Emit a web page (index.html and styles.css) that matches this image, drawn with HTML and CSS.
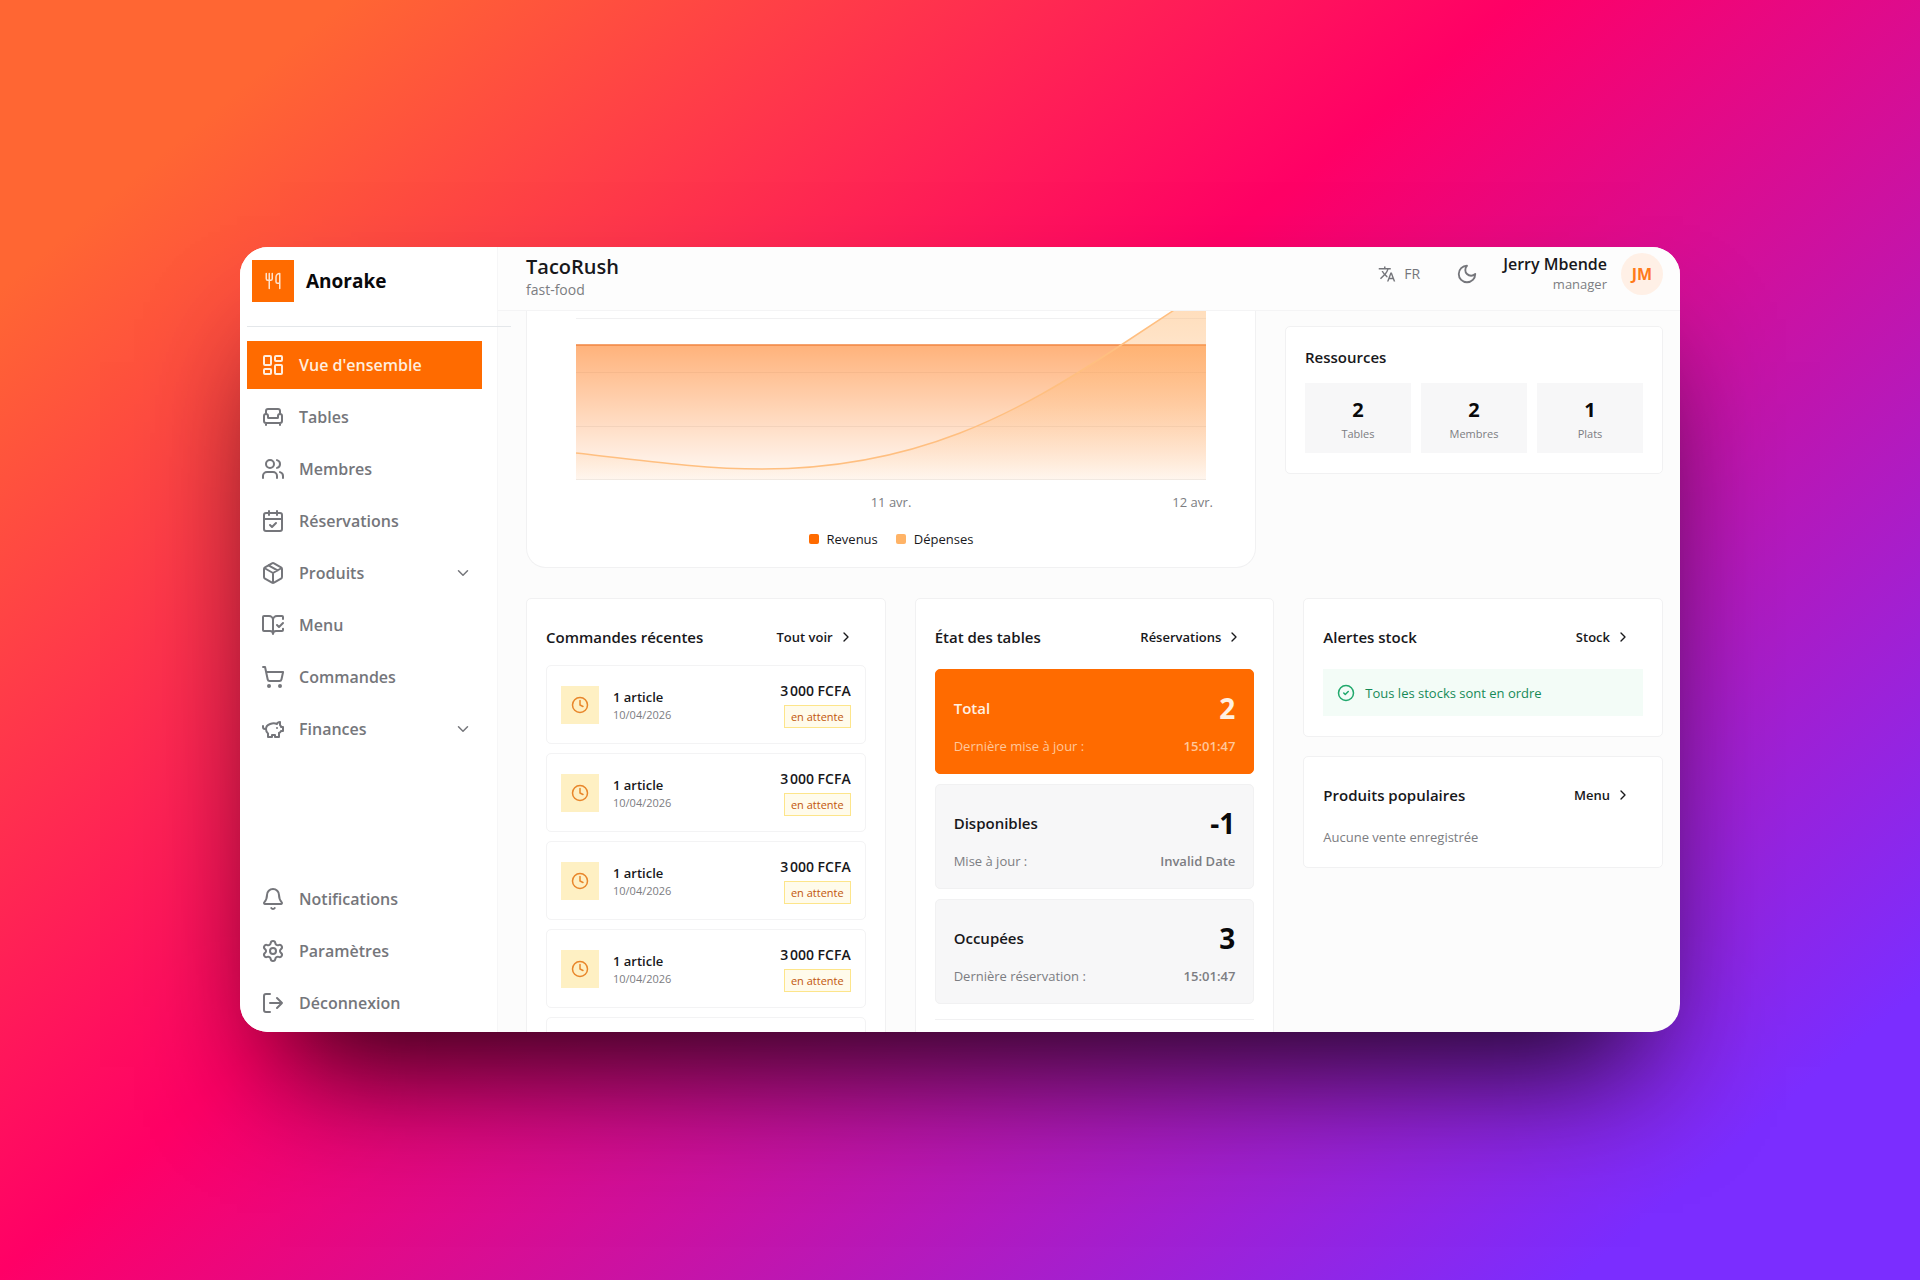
FILE: index.html
```html
<!DOCTYPE html>
<html lang="fr">
<head>
    <meta charset="UTF-8">
    <meta name="viewport" content="width=device-width, initial-scale=1.0">
    <title>Anorake - Vue d'ensemble</title>
    <link rel="stylesheet" href="styles.css">
</head>
<body>
    <!-- Icon sprite -->
    <svg class="sprite" aria-hidden="true">
        <symbol id="i-utensils" viewBox="0 0 24 24"><path d="M3 2v7c0 1.1.9 2 2 2h4a2 2 0 0 0 2-2V2M7 2v20M21 15V2a5 5 0 0 0-5 5v6c0 1.1.9 2 2 2h3Zm0 0v7"/></symbol>
        <symbol id="i-dashboard" viewBox="0 0 24 24"><rect x="3" y="3" width="7" height="9" rx="1"/><rect x="14" y="3" width="7" height="5" rx="1"/><rect x="14" y="12" width="7" height="9" rx="1"/><rect x="3" y="16" width="7" height="5" rx="1"/></symbol>
        <symbol id="i-armchair" viewBox="0 0 24 24"><path d="M19 9V6a2 2 0 0 0-2-2H7a2 2 0 0 0-2 2v3M3 16a2 2 0 0 0 2 2h14a2 2 0 0 0 2-2v-5a2 2 0 0 0-4 0v1.5a.5.5 0 0 1-.5.5h-9a.5.5 0 0 1-.5-.5V11a2 2 0 0 0-4 0zM5 18v2M19 18v2"/></symbol>
        <symbol id="i-users" viewBox="0 0 24 24"><path d="M16 21v-2a4 4 0 0 0-4-4H6a4 4 0 0 0-4 4v2M22 21v-2a4 4 0 0 0-3-3.87M16 3.13a4 4 0 0 1 0 7.75"/><circle cx="9" cy="7" r="4"/></symbol>
        <symbol id="i-calendar" viewBox="0 0 24 24"><path d="M8 2v4M16 2v4M3 10h18M9 16l2 2 4-4"/><rect x="3" y="4" width="18" height="18" rx="2"/></symbol>
        <symbol id="i-package" viewBox="0 0 24 24"><path d="M11 21.73a2 2 0 0 0 2 0l7-4A2 2 0 0 0 21 16V8a2 2 0 0 0-1-1.73l-7-4a2 2 0 0 0-2 0l-7 4A2 2 0 0 0 3 8v8a2 2 0 0 0 1 1.73zM12 22V12M3.3 7l8.7 5 8.7-5M7.5 4.27l9 5.15"/></symbol>
        <symbol id="i-book" viewBox="0 0 24 24"><path d="M12 21V7M16 12l2 2 4-4M22 6V4a1 1 0 0 0-1-1h-5a4 4 0 0 0-4 4 4 4 0 0 0-4-4H3a1 1 0 0 0-1 1v13a1 1 0 0 0 1 1h6a3 3 0 0 1 3 3 3 3 0 0 1 3-3h6a1 1 0 0 0 1-1v-1.3"/></symbol>
        <symbol id="i-cart" viewBox="0 0 24 24"><circle cx="8" cy="21" r="1"/><circle cx="19" cy="21" r="1"/><path d="M2.05 2.05h2l2.66 12.42a2 2 0 0 0 2 1.58h9.78a2 2 0 0 0 1.95-1.57l1.65-7.43H5.12"/></symbol>
        <symbol id="i-piggy" viewBox="0 0 24 24"><path d="M19 5c-1.5 0-2.8 1.4-3 2-3.5-1.5-11-.3-11 5 0 1.8 0 3 2 4.5V20h4v-2h3v2h4v-4c1-.5 1.7-1 2-2h2v-4h-2c0-1-.5-1.5-1-2V5zM2 9v1c0 1.1.9 2 2 2h1M16 11h.01"/></symbol>
        <symbol id="i-bell" viewBox="0 0 24 24"><path d="M10.268 21a2 2 0 0 0 3.464 0M3.262 15.326A1 1 0 0 0 4 17h16a1 1 0 0 0 .74-1.673C19.41 13.956 18 12.499 18 8A6 6 0 0 0 6 8c0 4.499-1.411 5.956-2.738 7.326"/></symbol>
        <symbol id="i-settings" viewBox="0 0 24 24"><path d="M9.671 4.136a2.34 2.34 0 0 1 4.659 0 2.34 2.34 0 0 0 3.319 1.915 2.34 2.34 0 0 1 2.33 4.033 2.34 2.34 0 0 0 0 3.831 2.34 2.34 0 0 1-2.33 4.033 2.34 2.34 0 0 0-3.319 1.915 2.34 2.34 0 0 1-4.659 0 2.34 2.34 0 0 0-3.32-1.915 2.34 2.34 0 0 1-2.33-4.033 2.34 2.34 0 0 0 0-3.831A2.34 2.34 0 0 1 6.35 6.051a2.34 2.34 0 0 0 3.319-1.915"/><circle cx="12" cy="12" r="3"/></symbol>
        <symbol id="i-logout" viewBox="0 0 24 24"><path d="M16 17l5-5-5-5M21 12H9M9 21H5a2 2 0 0 1-2-2V5a2 2 0 0 1 2-2h4"/></symbol>
        <symbol id="i-moon" viewBox="0 0 24 24"><path d="M12 3a6 6 0 0 0 9 9 9 9 0 1 1-9-9Z"/></symbol>
        <symbol id="i-clock" viewBox="0 0 24 24"><circle cx="12" cy="12" r="10"/><path d="M12 6v6l4 2"/></symbol>
        <symbol id="i-check" viewBox="0 0 24 24"><circle cx="12" cy="12" r="10"/><path d="M9 12l2 2 4-4"/></symbol>
        <symbol id="i-down" viewBox="0 0 24 24"><path d="M6 9l6 6 6-6"/></symbol>
        <symbol id="i-right" viewBox="0 0 24 24"><path d="M9 18l6-6-6-6"/></symbol>
        <symbol id="i-translate" viewBox="0 0 24 24"><path d="m12.87 15.07-2.54-2.51.03-.03c1.74-1.94 2.98-4.17 3.71-6.53H17V4h-7V2H8v2H1v1.99h11.17C11.5 7.92 10.44 9.75 9 11.35 8.07 10.32 7.3 9.19 6.69 8h-2c.73 1.63 1.73 3.17 2.98 4.56l-5.09 5.02L4 19l5-5 3.11 3.11.76-2.04zM18.5 10h-2L12 22h2l1.12-3h4.75L21 22h2l-4.5-12zm-2.62 7 1.62-4.33L19.12 17h-3.24z"/></symbol>
    </svg>

    <div class="window">
        <aside class="sidebar">
            <div class="brand">
                <span class="brand-logo"><svg class="icon icon-md"><use href="#i-utensils"/></svg></span>
                <span class="brand-name">Anorake</span>
            </div>
            <hr class="divider">
            <nav class="nav">
                <a href="#" class="nav-item active"><svg class="icon icon-lg"><use href="#i-dashboard"/></svg>Vue d'ensemble</a>
                <a href="#" class="nav-item"><svg class="icon icon-lg"><use href="#i-armchair"/></svg>Tables</a>
                <a href="#" class="nav-item"><svg class="icon icon-lg"><use href="#i-users"/></svg>Membres</a>
                <a href="#" class="nav-item"><svg class="icon icon-lg"><use href="#i-calendar"/></svg>Réservations</a>
                <button type="button" class="nav-item"><svg class="icon icon-lg"><use href="#i-package"/></svg>Produits<svg class="icon icon-md chevron"><use href="#i-down"/></svg></button>
                <a href="#" class="nav-item"><svg class="icon icon-lg"><use href="#i-book"/></svg>Menu</a>
                <a href="#" class="nav-item"><svg class="icon icon-lg"><use href="#i-cart"/></svg>Commandes</a>
                <button type="button" class="nav-item"><svg class="icon icon-lg"><use href="#i-piggy"/></svg>Finances<svg class="icon icon-md chevron"><use href="#i-down"/></svg></button>
            </nav>
            <nav class="nav nav-bottom">
                <a href="#" class="nav-item"><svg class="icon icon-lg"><use href="#i-bell"/></svg>Notifications</a>
                <a href="#" class="nav-item"><svg class="icon icon-lg"><use href="#i-settings"/></svg>Paramètres</a>
                <button type="button" class="nav-item"><svg class="icon icon-lg"><use href="#i-logout"/></svg>Déconnexion</button>
            </nav>
        </aside>

        <div class="main">
            <header class="topbar">
                <div class="shop">
                    <h1>TacoRush</h1>
                    <p>fast-food</p>
                </div>
                <div class="tools">
                    <button type="button" class="tool-btn"><svg class="icon icon-md icon-fill"><use href="#i-translate"/></svg>FR</button>
                    <button type="button" class="tool-btn" aria-label="Mode sombre"><svg class="icon"><use href="#i-moon"/></svg></button>
                    <div class="user">
                        <div class="user-text">
                            <strong>Jerry Mbende</strong>
                            <span>manager</span>
                        </div>
                        <span class="avatar">JM</span>
                    </div>
                </div>
            </header>

            <main class="content">
                <div class="row-top">
                    <section class="chart-card">
                        <svg class="plot" viewBox="0 0 631 169" preserveAspectRatio="none" role="img" aria-label="Revenus et dépenses">
                            <defs>
                                <linearGradient id="revenue" x1="0" y1="0" x2="0" y2="1">
                                    <stop offset="0" stop-color="#ff6b00" stop-opacity=".52"/>
                                    <stop offset="1" stop-color="#ff6b00" stop-opacity=".03"/>
                                </linearGradient>
                                <linearGradient id="expense" x1="0" y1="0" x2="0" y2="1">
                                    <stop offset="0" stop-color="#ffb366" stop-opacity=".48"/>
                                    <stop offset="1" stop-color="#ffb366" stop-opacity=".06"/>
                                </linearGradient>
                            </defs>
                            <path class="grid-line" d="M0 7.5H631M0 61.5H631M0 115.5H631M0 168.5H631"/>
                            <path fill="url(#revenue)" d="M0 34H631V169H0Z"/>
                            <path class="line-revenue" d="M0 34H631"/>
                            <path fill="url(#expense)" d="M0 142C70 150 130 158 186 158C340 158 440 104 546 34L631 -22V169H0Z"/>
                            <path class="line-expense" d="M0 142C70 150 130 158 186 158C340 158 440 104 546 34L631 -22"/>
                        </svg>
                        <div class="axis">
                            <span></span>
                            <span>11 avr.</span>
                            <span>12 avr.</span>
                        </div>
                        <ul class="legend">
                            <li><i class="dot dot-revenue"></i>Revenus</li>
                            <li><i class="dot dot-expense"></i>Dépenses</li>
                        </ul>
                    </section>

                    <section class="card resources">
                        <h2>Ressources</h2>
                        <div class="tiles">
                            <div class="tile"><strong>2</strong><span>Tables</span></div>
                            <div class="tile"><strong>2</strong><span>Membres</span></div>
                            <div class="tile"><strong>1</strong><span>Plats</span></div>
                        </div>
                    </section>
                </div>

                <div class="row-bottom">
                    <section class="card">
                        <div class="card-head orders-head">
                            <h2>Commandes récentes</h2>
                            <a href="#" class="more">Tout voir<svg class="icon icon-sm"><use href="#i-right"/></svg></a>
                        </div>
                        <ul class="orders">
                            <li class="order">
                                <span class="order-icon"><svg class="icon icon-md"><use href="#i-clock"/></svg></span>
                                <div class="order-info"><strong>1 article</strong><span>10/04/2026</span></div>
                                <div class="order-side"><strong>3&#8239;000 FCFA</strong><span class="badge">en attente</span></div>
                            </li>
                            <li class="order">
                                <span class="order-icon"><svg class="icon icon-md"><use href="#i-clock"/></svg></span>
                                <div class="order-info"><strong>1 article</strong><span>10/04/2026</span></div>
                                <div class="order-side"><strong>3&#8239;000 FCFA</strong><span class="badge">en attente</span></div>
                            </li>
                            <li class="order">
                                <span class="order-icon"><svg class="icon icon-md"><use href="#i-clock"/></svg></span>
                                <div class="order-info"><strong>1 article</strong><span>10/04/2026</span></div>
                                <div class="order-side"><strong>3&#8239;000 FCFA</strong><span class="badge">en attente</span></div>
                            </li>
                            <li class="order">
                                <span class="order-icon"><svg class="icon icon-md"><use href="#i-clock"/></svg></span>
                                <div class="order-info"><strong>1 article</strong><span>10/04/2026</span></div>
                                <div class="order-side"><strong>3&#8239;000 FCFA</strong><span class="badge">en attente</span></div>
                            </li>
                            <li class="order"></li>
                        </ul>
                    </section>

                    <section class="card">
                        <div class="card-head">
                            <h2>État des tables</h2>
                            <a href="#" class="more">Réservations<svg class="icon icon-sm"><use href="#i-right"/></svg></a>
                        </div>
                        <div class="states">
                            <div class="state state-total">
                                <div class="state-row"><h3>Total</h3><strong>2</strong></div>
                                <div class="state-meta"><span>Dernière mise à jour :</span><time>15:01:47</time></div>
                            </div>
                            <div class="state">
                                <div class="state-row"><h3>Disponibles</h3><strong>-1</strong></div>
                                <div class="state-meta"><span>Mise à jour :</span><time>Invalid Date</time></div>
                            </div>
                            <div class="state">
                                <div class="state-row"><h3>Occupées</h3><strong>3</strong></div>
                                <div class="state-meta"><span>Dernière réservation :</span><time>15:01:47</time></div>
                            </div>
                        </div>
                        <hr class="states-end">
                    </section>

                    <div class="stack">
                        <section class="card">
                            <div class="card-head">
                                <h2>Alertes stock</h2>
                                <a href="#" class="more">Stock<svg class="icon icon-sm"><use href="#i-right"/></svg></a>
                            </div>
                            <p class="notice"><svg class="icon icon-md"><use href="#i-check"/></svg>Tous les stocks sont en ordre</p>
                        </section>
                        <section class="card">
                            <div class="card-head">
                                <h2>Produits populaires</h2>
                                <a href="#" class="more">Menu<svg class="icon icon-sm"><use href="#i-right"/></svg></a>
                            </div>
                            <p class="empty">Aucune vente enregistrée</p>
                        </section>
                    </div>
                </div>
            </main>
        </div>
    </div>
</body>
</html>
```
FILE: styles.css
```css
* {
    box-sizing: border-box;
}
body {
    margin: 0;
    min-height: 100vh;
    display: flex;
    align-items: center;
    justify-content: center;
    overflow: hidden;
    padding-bottom: 1px;
    font-family: "Open Sans", "Noto Sans", sans-serif;
    font-size: 13px;
    line-height: 20px;
    color: #18181b;
    background: linear-gradient(140deg, #ff6633 10%, #ff0066 44%, #7b2dff 90%);
}
h1, h2, h3, p, ul {
    margin: 0;
    padding: 0;
}
ul {
    list-style: none;
}
a {
    color: inherit;
    text-decoration: none;
}
button {
    font: inherit;
    color: inherit;
    background: none;
    border: 0;
    padding: 0;
    cursor: pointer;
}
.sprite {
    display: none;
}
.icon {
    flex: none;
    width: 22px;
    height: 22px;
    fill: none;
    stroke: currentColor;
    stroke-width: 2;
    stroke-linecap: round;
    stroke-linejoin: round;
}
.icon-sm {
    width: 16px;
    height: 16px;
}
.icon-md {
    width: 18px;
    height: 18px;
}
.icon-lg {
    width: 24px;
    height: 24px;
}
.icon-fill {
    fill: currentColor;
    stroke: none;
}
.window {
    display: flex;
    width: 75%;
    aspect-ratio: 1440 / 785;
    border-radius: 28px;
    overflow: hidden;
    background: #fcfcfc;
    box-shadow: 0 75px 120px -40px rgba(0, 0, 0, 0.85);
}

/* Sidebar */
.sidebar {
    flex: none;
    display: flex;
    flex-direction: column;
    width: 258px;
    padding: 13px 0 5px 7px;
    background: #fff;
    border-right: 1px solid #f6f6f7;
}
.brand {
    display: flex;
    align-items: center;
    gap: 12px;
    padding-left: 5px;
}
.brand-logo {
    display: flex;
    align-items: center;
    justify-content: center;
    width: 42px;
    height: 42px;
    background: #ff6b00;
    color: #ffe3cc;
}
.brand-name {
    font-size: 19px;
    font-weight: 700;
    color: #09090b;
}
/* Runs a little past the sidebar edge */
.divider {
    flex: none;
    width: 264px;
    height: 1px;
    margin: 24px 0 14px;
    border: 0;
    background: #e4e7ea;
    z-index: 1;
}
.nav {
    display: flex;
    flex-direction: column;
    gap: 4px;
    padding-right: 15px;
}
.nav-bottom {
    margin-top: auto;
}
.nav-item {
    display: flex;
    align-items: center;
    gap: 14px;
    height: 48px;
    padding: 0 10px 0 14px;
    font-size: 16px;
    font-weight: 600;
    color: #75767b;
    text-align: left;
}
.nav-item.active {
    background: #ff6b00;
    color: #ffeddd;
}
.chevron {
    margin-left: auto;
}

/* Header */
.main {
    flex: 1;
    display: flex;
    flex-direction: column;
    min-width: 0;
}
.topbar {
    flex: none;
    display: flex;
    justify-content: space-between;
    align-items: flex-start;
    height: 64px;
    padding: 6px 17px 0 28px;
    background: #fdfdfd;
    border-bottom: 1px solid #f4f4f5;
}
.shop h1 {
    font-size: 20px;
    line-height: 28px;
    font-weight: 600;
}
.shop p {
    font-size: 14px;
    line-height: 18px;
    color: #7c7d82;
}
.tools {
    display: flex;
    align-items: center;
    height: 42px;
    gap: 36px;
}
.tool-btn {
    display: flex;
    align-items: center;
    gap: 8px;
    font-size: 14px;
    color: #75767b;
}
.user {
    display: flex;
    align-items: center;
    gap: 14px;
    margin-left: -11px;
}
.user-text {
    text-align: right;
}
.user-text strong,
.user-text span {
    display: block;
}
.user-text strong {
    font-size: 16px;
    font-weight: 600;
}
.user-text span {
    color: #7c7d82;
}
.avatar {
    display: flex;
    align-items: center;
    justify-content: center;
    width: 42px;
    height: 42px;
    border-radius: 50%;
    background: #fff0e6;
    color: #ff7a1a;
    font-size: 16px;
    font-weight: 700;
}

/* Content */
.content {
    flex: 1;
    min-height: 0;
    overflow: hidden;
    padding: 0 17px 0 28px;
}
.row-top {
    display: grid;
    grid-template-columns: minmax(0, 1fr) 378px;
    gap: 29px;
    align-items: start;
}
.row-bottom {
    display: grid;
    grid-template-columns: repeat(3, minmax(0, 1fr));
    gap: 29px;
    margin-top: 30px;
}
.card {
    padding: 20px 19px;
    border: 1px solid #f1f1f2;
    border-radius: 5px;
    background: #fff;
}
.card h2 {
    font-size: 15px;
    font-weight: 600;
}
.chart-card {
    border: 1px solid #f1f1f2;
    border-top: 0;
    border-radius: 0 0 20px 20px;
    background: #fff;
    padding-bottom: 18px;
}
.plot {
    display: block;
    width: calc(100% - 98px);
    height: 169px;
    margin: 0 49px;
}
.grid-line {
    fill: none;
    stroke: #f0f0f1;
}
.line-revenue {
    fill: none;
    stroke: #f08540;
    stroke-width: 1.5;
}
.line-expense {
    fill: none;
    stroke: #ffbf80;
    stroke-width: 1.5;
}
.axis {
    display: grid;
    grid-template-columns: 1fr 1fr 1fr;
    padding: 12px 42px 0;
    color: #7c7d82;
    text-align: center;
}
.axis span:last-child {
    text-align: right;
}
.legend {
    display: flex;
    justify-content: center;
    gap: 18px;
    margin-top: 17px;
}
.legend li {
    display: flex;
    align-items: center;
    gap: 8px;
}
.dot {
    width: 10px;
    height: 10px;
    border-radius: 2px;
}
.dot-revenue {
    background: #ff6b00;
}
.dot-expense {
    background: #ffb366;
}
.resources {
    margin-top: 15px;
}
.tiles {
    display: grid;
    grid-template-columns: repeat(3, 1fr);
    gap: 10px;
    margin-top: 16px;
}
.tile {
    display: flex;
    flex-direction: column;
    align-items: center;
    padding: 13px 0 9px;
    background: #f7f7f8;
}
.tile strong {
    font-size: 20px;
    line-height: 28px;
    font-weight: 700;
    color: #09090b;
}
.tile span {
    font-size: 11px;
    color: #7c7d82;
}
.card-head {
    display: flex;
    align-items: center;
    justify-content: space-between;
    height: 36px;
    margin-bottom: 14px;
}
.orders-head {
    margin-bottom: 10px;
}
.more {
    display: flex;
    align-items: center;
    gap: 5px;
    padding-right: 12px;
    font-weight: 600;
}

/* Orders */
.orders {
    display: flex;
    flex-direction: column;
    gap: 9px;
}
.order {
    display: flex;
    align-items: center;
    gap: 14px;
    height: 79px;
    padding: 0 14px;
    border: 1px solid #f3f3f4;
    border-radius: 5px;
}
.order-icon {
    display: flex;
    align-items: center;
    justify-content: center;
    width: 38px;
    height: 38px;
    background: #fef0c3;
    color: #e8862a;
}
.order-info {
    flex: 1;
}
.order strong {
    display: block;
    font-size: 14px;
    font-weight: 600;
}
.order .order-info strong {
    font-size: 13px;
}
.order-info span {
    display: block;
    font-size: 11px;
    line-height: 15px;
    color: #7c7d82;
}
.order-side {
    display: flex;
    flex-direction: column;
    align-items: flex-end;
    gap: 4px;
}
.badge {
    padding: 0 6px;
    border: 1px solid #fde58a;
    background: #fffbeb;
    color: #c2560c;
    font-size: 11px;
    line-height: 21px;
}

/* Tables state */
.states {
    display: flex;
    flex-direction: column;
    gap: 10px;
}
.state {
    padding: 19px 18px 17px;
    border: 1px solid #f1f1f2;
    border-radius: 5px;
    background: #f7f7f8;
}
.state-row,
.state-meta {
    display: flex;
    align-items: center;
    justify-content: space-between;
}
.state h3 {
    font-size: 15px;
    font-weight: 600;
}
.state strong {
    font-size: 28px;
    line-height: 38px;
    font-weight: 700;
    color: #09090b;
}
.state-meta {
    margin-top: 9px;
    color: #7c7d82;
}
.state-meta time {
    font-weight: 600;
}
.state-total {
    border-color: #ff6b00;
    background: #ff6b00;
}
.state-total h3,
.state-total strong {
    color: #fff0e2;
}
.state-total .state-meta {
    color: #ffc79a;
}
.states-end {
    height: 1px;
    margin: 15px 0 0;
    border: 0;
    background: #f1f1f2;
}

/* Stock and products */
.stack {
    display: flex;
    flex-direction: column;
    gap: 19px;
}
.notice {
    display: flex;
    align-items: center;
    gap: 10px;
    height: 47px;
    padding: 0 14px;
    background: #f3fcf7;
    color: #168a58;
}
.notice .icon {
    color: #20a86c;
}
.empty {
    color: #7c7d82;
}
```
